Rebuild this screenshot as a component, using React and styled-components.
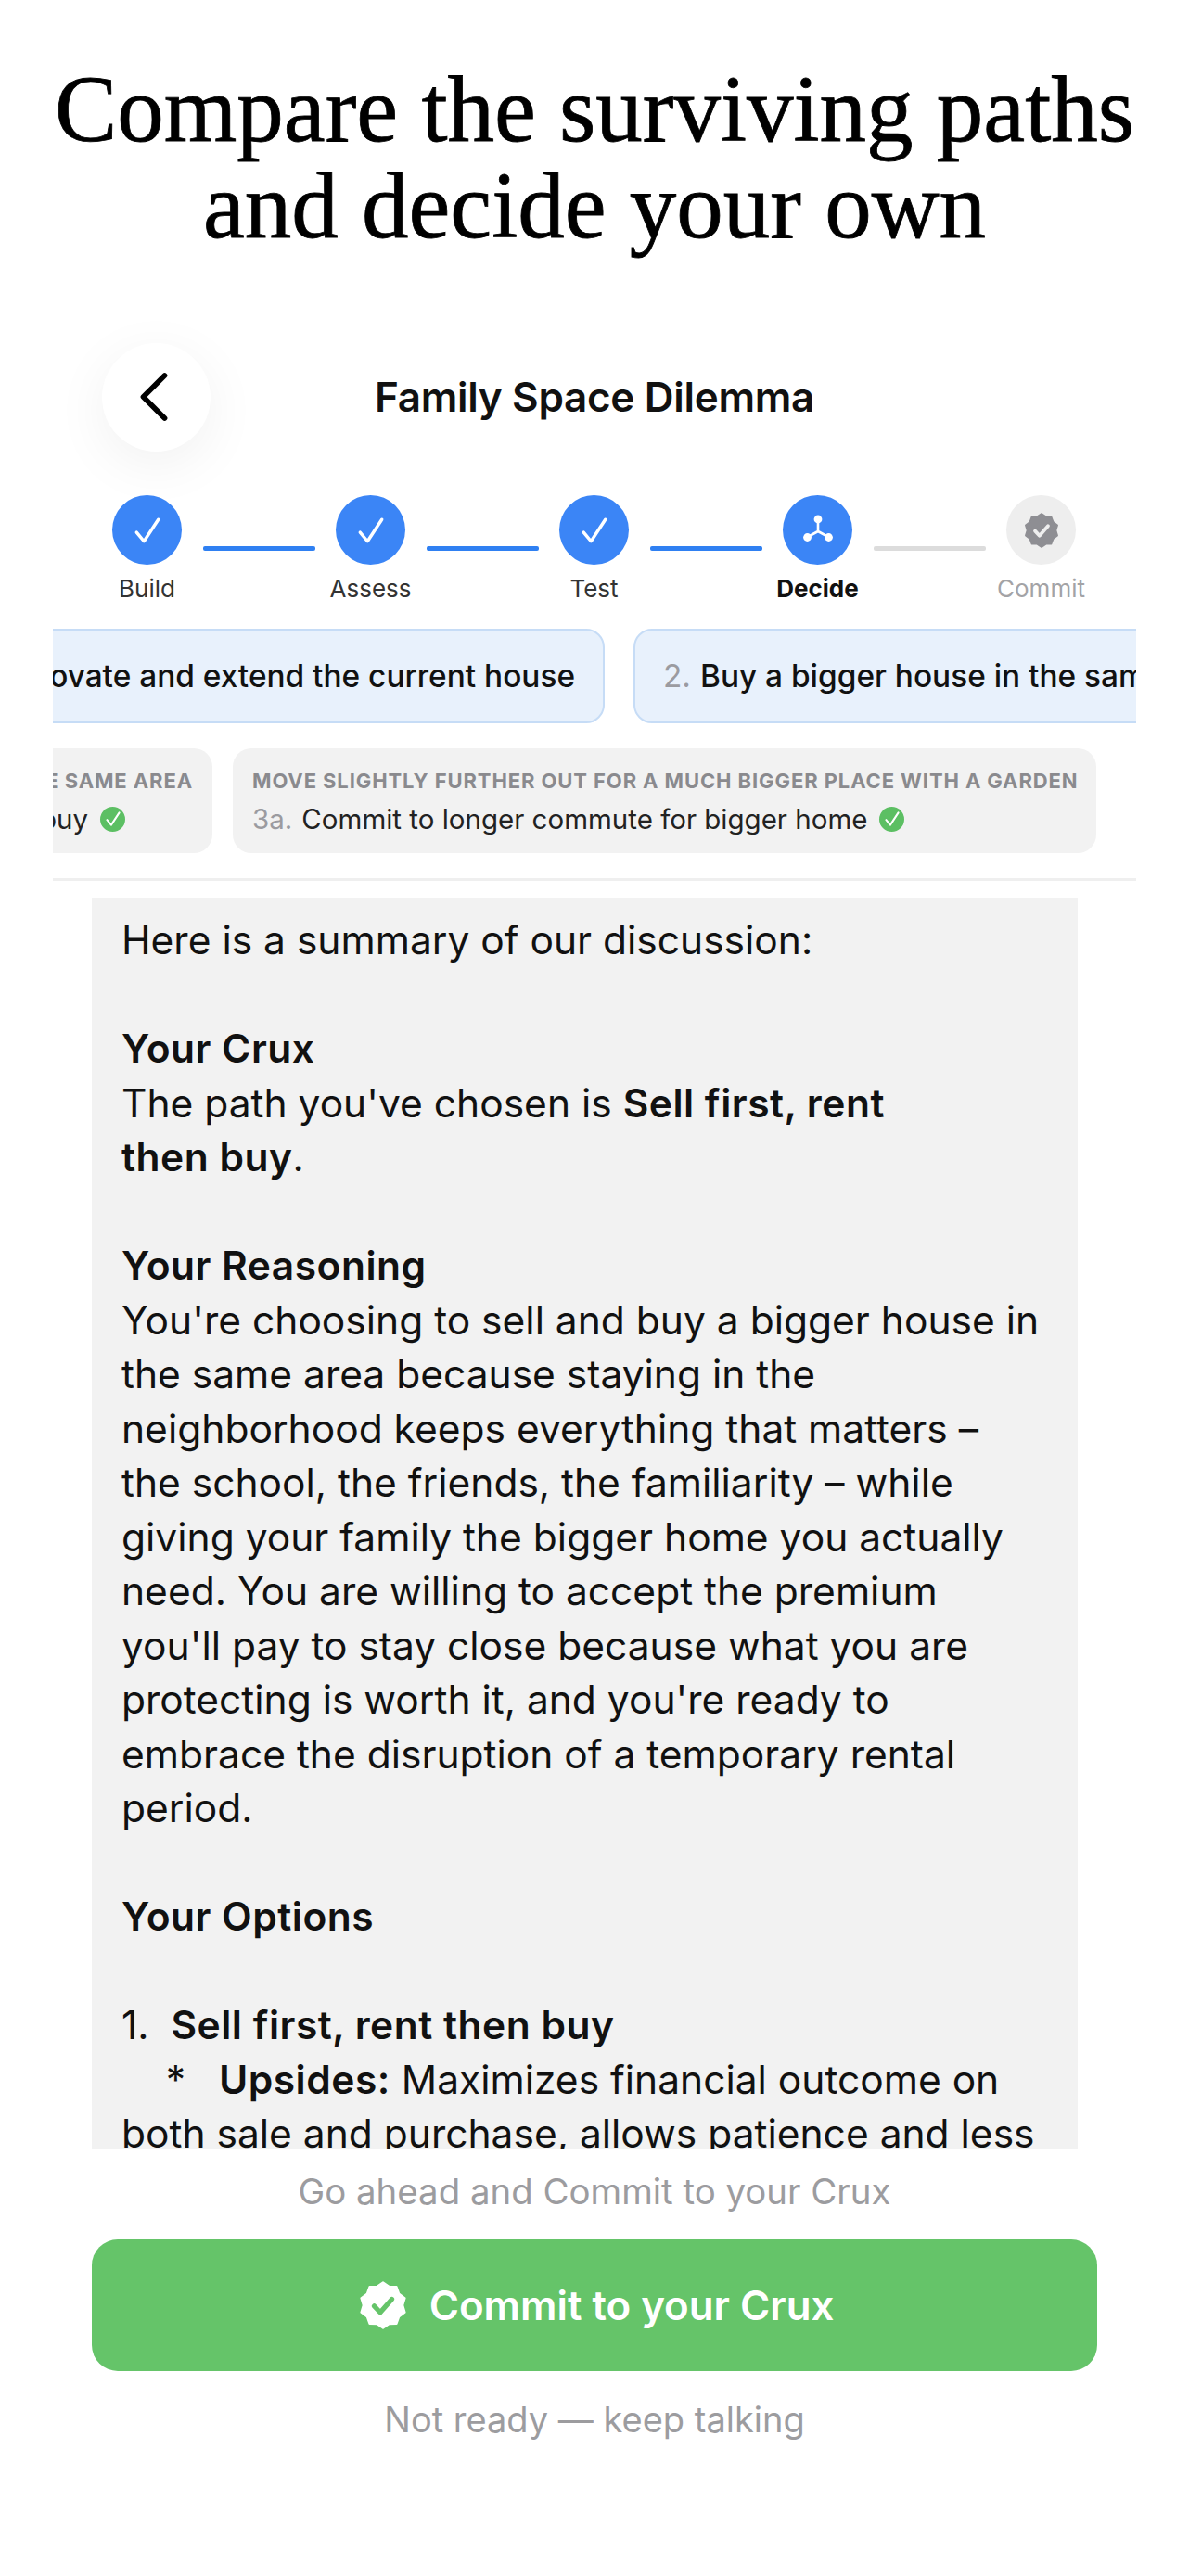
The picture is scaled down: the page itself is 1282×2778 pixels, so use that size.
import React from "react";
import styled, { createGlobalStyle } from "styled-components";
import { ChevronLeft } from "lucide-react";

const Global = createGlobalStyle`
  html, body { margin: 0; padding: 0; background: #fff; }
  body { font-family: Inter, "Liberation Sans", sans-serif; color: #111; }
`;

const Page = styled.div`
  width: 1282px;
  height: 2778px;
  overflow: hidden;
  background: #fff;
`;
const Headline = styled.h1`
  margin: 0;
  padding-top: 66px;
  height: 282px;
  box-sizing: border-box;
  font-family: "Liberation Serif", serif;
  font-weight: 400;
  font-size: 101px;
  line-height: 104px;
  text-align: center;
  color: #000;
  -webkit-text-stroke: 0.8px #000;
`;
const Phone = styled.main`
  margin: 0 57px;
  width: 1168px;
  overflow: hidden;
  display: flex;
  flex-direction: column;
`;
const TopBar = styled.header`
  height: 252px;
  display: grid;
  grid-template-columns: 1fr auto 1fr;
  align-items: center;
  padding: 40px 53px 0;
  box-sizing: border-box;
`;
const BackButton = styled.button`
  width: 117px;
  height: 117px;
  border: 0;
  border-radius: 50%;
  background: #fff;
  box-shadow: 0 14px 60px rgba(0, 0, 0, 0.06);
  display: flex;
  align-items: center;
  justify-content: center;
  padding: 0 6px 0 0;
  color: #000;
`;
const Title = styled.div`
  font-size: 44px;
  font-weight: 600;
  letter-spacing: -0.3px;
  color: #111;
`;
const Stepper = styled.nav`
  display: flex;
  justify-content: center;
  align-items: flex-start;
  height: 144px;
  margin-left: -1px;
`;
const Step = styled.div`
  width: 120px;
  display: flex;
  flex-direction: column;
  align-items: center;
  gap: 9px;
`;
const StepDot = styled.div`
  width: 75px;
  height: 75px;
  border-radius: 50%;
  background: ${(p) => (p.$off ? "#eeeeee" : "#3b85f6")};
  display: flex;
  align-items: center;
  justify-content: center;
  color: #fff;
`;
const StepLabel = styled.div`
  font-size: 26px;
  line-height: 34px;
  white-space: nowrap;
  font-weight: ${(p) => (p.$active ? 700 : 400)};
  color: ${(p) => (p.$off ? "#a3a3a6" : p.$active ? "#111" : "#333")};
`;
const Connector = styled.div`
  width: 121px;
  height: 5px;
  margin-top: 55px;
  background: ${(p) => (p.$off ? "#dcdcdc" : "#2f80f2")};
  border-radius: 2px;
`;
const PathRow = styled.div`
  display: flex;
  gap: 31px;
  margin-left: -130px;
  width: 2000px;
`;
const PathCard = styled.div`
  flex: none;
  width: ${(p) => p.$w}px;
  height: 102px;
  box-sizing: border-box;
  background: #e8f1fc;
  border: 2px solid #c6dcf6;
  border-radius: 20px;
  display: flex;
  align-items: center;
  justify-content: ${(p) => (p.$right ? "flex-end" : "flex-start")};
  padding: 0 30px;
  font-size: 33.4px;
  font-weight: 500;
  color: #111;
  white-space: nowrap;
  overflow: hidden;
`;
const Num = styled.span`
  color: #9b9ba0;
  font-weight: 400;
  margin-right: ${(p) => p.$gap}px;
`;
const OptionRow = styled.div`
  display: flex;
  gap: 22px;
  margin-top: 27px;
  margin-left: -400px;
  width: 2000px;
`;
const OptionCard = styled.div`
  flex: none;
  width: ${(p) => p.$w}px;
  height: 113px;
  box-sizing: border-box;
  background: #f2f2f2;
  border-radius: 20px;
  padding: 21px 21px 0;
  text-align: ${(p) => (p.$right ? "right" : "left")};
  overflow: hidden;
  white-space: nowrap;
`;
const OptionHead = styled.div`
  font-size: 22px;
  line-height: 28px;
  font-weight: 700;
  letter-spacing: 0.9px;
  color: #8a8a8e;
  text-transform: uppercase;
`;
const OptionText = styled.div`
  display: flex;
  align-items: center;
  justify-content: ${(p) => (p.$inset ? "flex-end" : "flex-start")};
  padding-right: ${(p) => p.$inset || 0}px;
  gap: 13px;
  margin-top: 9px;
  font-size: 29.5px;
  line-height: 36px;
  color: #222;
`;
const GreenTick = styled.span`
  width: 27px;
  height: 27px;
  border-radius: 50%;
  background: #5cbf63;
  color: #fff;
  display: inline-flex;
  align-items: center;
  justify-content: center;
`;
const Divider = styled.hr`
  margin: 27px 0 18px;
  border: 0;
  height: 3px;
  background: #efefef;
`;
const Transcript = styled.article`
  margin: 0 63px 0 42px;
  height: 1349px;
  box-sizing: border-box;
  background: #f2f2f2;
  padding: 17px 32px 0;
  overflow: hidden;
  font-size: 42.5px;
  line-height: 58.5px;
  color: #111;
  white-space: nowrap;
  strong { font-weight: 600; letter-spacing: 0.5px; }
`;
const Footer = styled.footer`
  margin: 0 42px;
  display: flex;
  flex-direction: column;
  align-items: center;
`;
const Hint = styled.div`
  font-size: ${(p) => p.$size}px;
  line-height: 50px;
  color: #9c9c9f;
  margin-top: ${(p) => p.$top}px;
`;
const CommitButton = styled.button`
  width: 1084px;
  height: 142px;
  margin-top: 27px;
  border: 0;
  border-radius: 28px;
  background: #65c469;
  color: #fff;
  font-family: inherit;
  font-size: 43.8px;
  font-weight: 600;
  display: flex;
  align-items: center;
  justify-content: center;
  gap: 24px;
  padding: 0 0 0 4px;
`;

function badgePath(cx, cy, R, r, n) {
  let d = "";
  const steps = n * 2;
  for (let i = 0; i < steps; i++) {
    const a = (Math.PI * i) / n - Math.PI / 2;
    const rad = i % 2 ? r : R;
    const x = (cx + rad * Math.cos(a)).toFixed(2);
    const y = (cy + rad * Math.sin(a)).toFixed(2);
    d += (i ? "L" : "M") + x + " " + y;
  }
  return d + "Z";
}

const Badge = ({ size, fill, tick }) => (
  <svg width={size} height={size} viewBox="0 0 24 24">
    <path d={badgePath(12, 12, 11.4, 9.8, 10)} fill={fill} stroke={fill} strokeWidth="1" strokeLinejoin="round" />
    <path d="M7.6 12.4l3 3.2 5.8-6.6" fill="none" stroke={tick} strokeWidth="2.4" strokeLinecap="round" strokeLinejoin="round" />
  </svg>
);

const Tick = ({ size, weight }) => (
  <svg width={size} height={size} viewBox="0 0 30 30" fill="none" stroke="currentColor" strokeWidth={weight} strokeLinecap="round" strokeLinejoin="round">
    <path d="M4 17l7.5 9L26 4" />
  </svg>
);

const DecideIcon = () => (
  <svg width="36" height="36" viewBox="0 0 36 36" fill="#fff" stroke="#fff">
    <path d="M18 6v13M18 19L7 25M18 19l11 6" fill="none" strokeWidth="2.6" />
    <circle cx="18" cy="6" r="4.4" stroke="none" />
    <circle cx="6.5" cy="25.5" r="4.4" stroke="none" />
    <circle cx="29.5" cy="25.5" r="4.4" stroke="none" />
  </svg>
);

const steps = [
  { label: "Build", icon: "check" },
  { label: "Assess", icon: "check" },
  { label: "Test", icon: "check" },
  { label: "Decide", icon: "decide", active: true },
  { label: "Commit", icon: "badge", off: true },
];

export default function App() {
  return (
    <Page>
      <Global />
      <Headline>
        Compare the surviving paths
        <br />
        and decide your own
      </Headline>
      <Phone>
        <TopBar>
          <div>
            <BackButton aria-label="Back">
              <ChevronLeft size={92} strokeWidth={1.5} />
            </BackButton>
          </div>
          <Title>Family Space Dilemma</Title>
          <div />
        </TopBar>
        <Stepper>
          {steps.map((s, i) => (
            <React.Fragment key={s.label}>
              {i > 0 && <Connector $off={s.off} />}
              <Step>
                <StepDot $off={s.off}>
                  {s.icon === "check" && <Tick size={32} weight={3.2} />}
                  {s.icon === "decide" && <DecideIcon />}
                  {s.icon === "badge" && <Badge size={38} fill="#8e8e93" tick="#eeeeee" />}
                </StepDot>
                <StepLabel $active={s.active} $off={s.off}>{s.label}</StepLabel>
              </Step>
            </React.Fragment>
          ))}
        </Stepper>
        <PathRow>
          <PathCard $w={725} $right>1.&nbsp;Renovate and extend the current house</PathCard>
          <PathCard $w={900}>
            <Num $gap={10}>2.</Num>Buy a bigger house in the same area
          </PathCard>
        </PathRow>
        <OptionRow>
          <OptionCard $w={572} $right>
            <OptionHead>Buy a bigger house in the same area</OptionHead>
            <OptionText $inset={73}>
              <span>2b. Sell first, rent then buy</span>
              <GreenTick><Tick size={18} weight={3.4} /></GreenTick>
            </OptionText>
          </OptionCard>
          <OptionCard $w={931}>
            <OptionHead>Move slightly further out for a much bigger place with a garden</OptionHead>
            <OptionText>
              <span><Num $gap={10}>3a.</Num>Commit to longer commute for bigger home</span>
              <GreenTick><Tick size={18} weight={3.4} /></GreenTick>
            </OptionText>
          </OptionCard>
        </OptionRow>
        <Divider />
        <Transcript>
          Here is a summary of our discussion:
          <br /><br />
          <strong>Your Crux</strong>
          <br />
          The path you've chosen is <strong>Sell first, rent</strong>
          <br />
          <strong>then buy</strong>.
          <br /><br />
          <strong>Your Reasoning</strong>
          <br />
          You're choosing to sell and buy a bigger house in
          <br />
          the same area because staying in the
          <br />
          neighborhood keeps everything that matters –
          <br />
          the school, the friends, the familiarity – while
          <br />
          giving your family the bigger home you actually
          <br />
          need. You are willing to accept the premium
          <br />
          you'll pay to stay close because what you are
          <br />
          protecting is worth it, and you're ready to
          <br />
          embrace the disruption of a temporary rental
          <br />
          period.
          <br /><br />
          <strong>Your Options</strong>
          <br /><br />
          1.&nbsp; <strong>Sell first, rent then buy</strong>
          <br />
          &nbsp;&nbsp;&nbsp; *&nbsp;&nbsp;&nbsp;<strong>Upsides:</strong> Maximizes financial outcome on
          <br />
          both sale and purchase, allows patience and less
          <br />
          pressure.
        </Transcript>
        <Footer>
          <Hint $top={21} $size={38.4}>Go ahead and Commit to your Crux</Hint>
          <CommitButton>
            <Badge size={52} fill="#fff" tick="#65c469" />
            Commit to your Crux
          </CommitButton>
          <Hint $top={27} $size={38}>Not ready — keep talking</Hint>
        </Footer>
      </Phone>
    </Page>
  );
}
